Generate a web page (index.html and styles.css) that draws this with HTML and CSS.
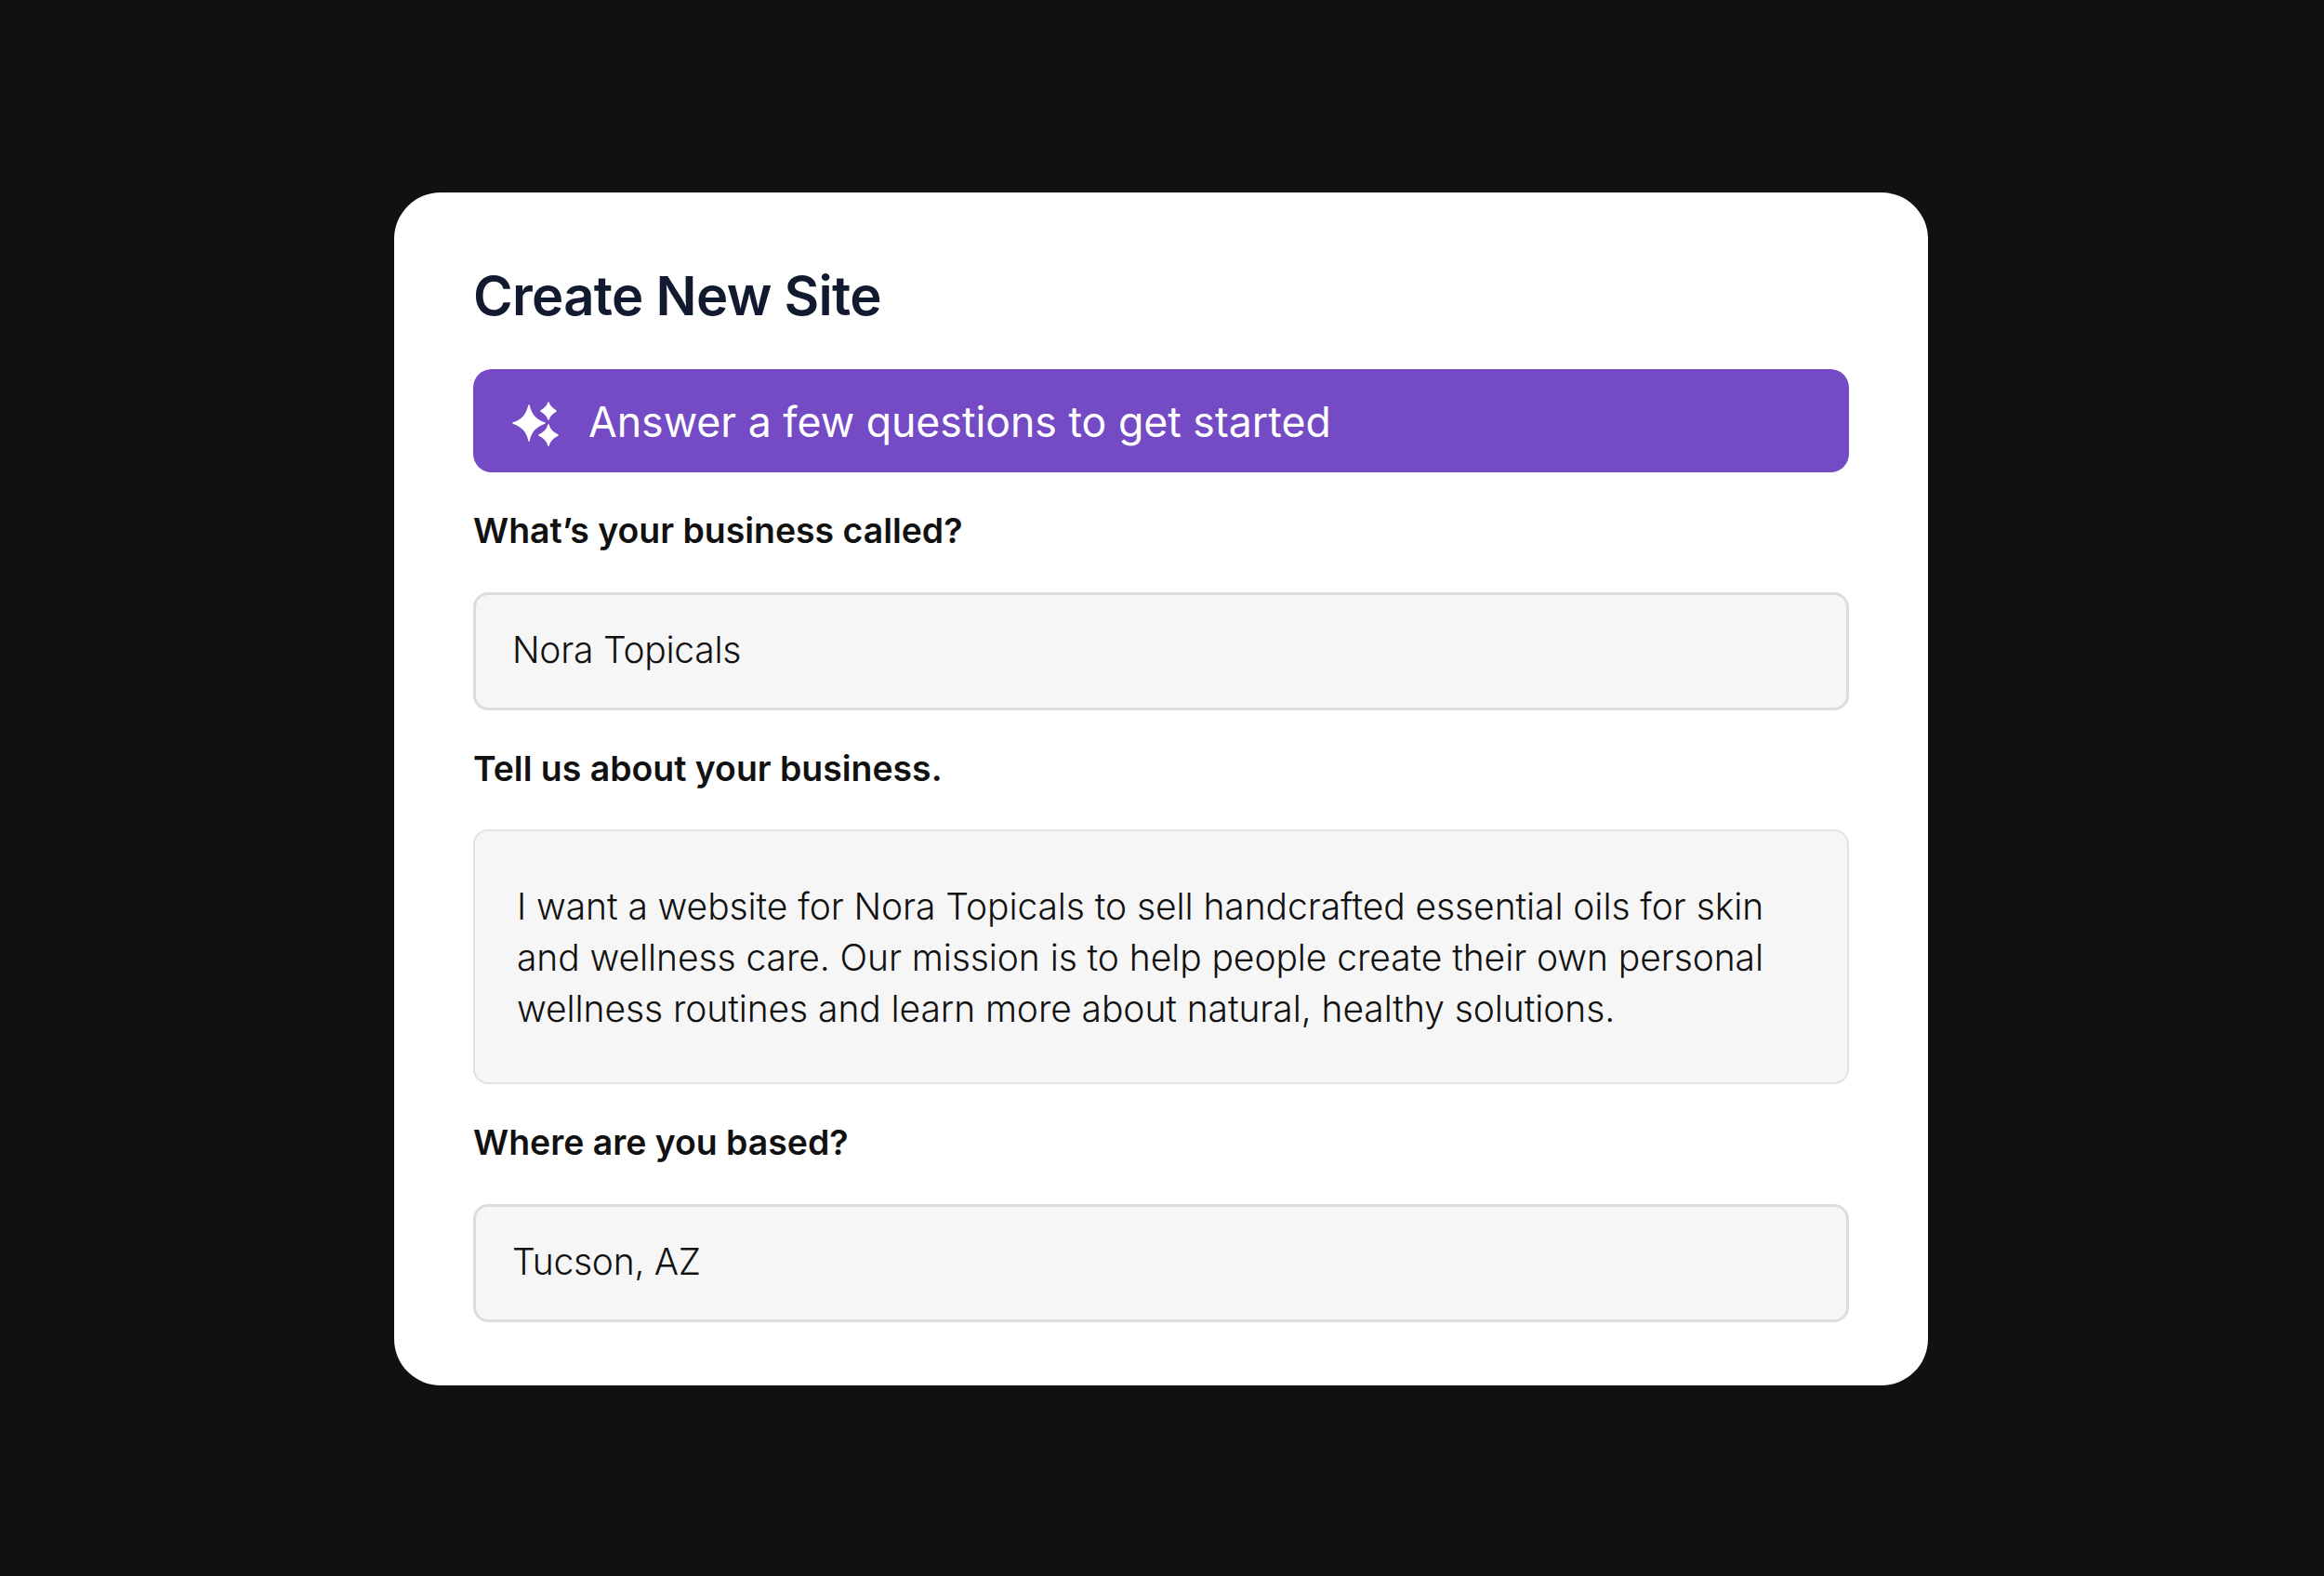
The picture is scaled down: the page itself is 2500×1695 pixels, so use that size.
FILE: index.html
```html
<!DOCTYPE html>
<html lang="en">
<head>
  <meta charset="UTF-8" />
  <title>Create New Site</title>
  <link rel="stylesheet" href="styles.css">
</head>
<body>

<div class="card">
  <h1 class="title">Create New Site</h1>

  <div class="banner">
    <svg class="sparkle" viewBox="0 0 56 56" aria-hidden="true">
      <path d="M21 11 C23 20 27 26 38 30 C27 34 23 40 21 49 C19 40 15 34 4 30 C15 26 19 20 21 11 Z"/>
      <path d="M42 8 C43 12 45 14 50 17 C45 20 43 22 42 26 C41 22 39 20 34 17 C39 14 41 12 42 8 Z"/>
      <path d="M42 32 C43 37 46 40 52 43 C46 46 43 49 42 54 C41 49 38 46 32 43 C38 40 41 37 42 32 Z"/>
    </svg>
    <span>Answer a few questions to get started</span>
  </div>

  <div class="label">What’s your business called?</div>
  <div class="field">Nora Topicals</div>

  <div class="label">Tell us about your business.</div>
  <div class="field field-area">I want a website for Nora Topicals to sell handcrafted essential oils for skin and wellness care. Our mission is to help people create their own personal wellness routines and learn more about natural, healthy solutions.</div>

  <div class="label">Where are you based?</div>
  <div class="field">Tucson, AZ</div>
</div>

</body>
</html>
```

FILE: styles.css
```css
* { margin: 0; padding: 0; box-sizing: border-box; }

body {
  width: 2500px;
  height: 1695px;
  background: #111;
  color: #111;
  font-family: "Inter", sans-serif;
  padding: 207px 0 0 424px;
  overflow: hidden;
}

.card {
  width: 1650px;
  height: 1283px;
  background: #fff;
  border-radius: 50px;
  padding: 76px 85px 0 85px;
}

.title {
  font-size: 58px;
  line-height: 70px;
  font-weight: 600;
  letter-spacing: -0.7px;
  color: #111a2e;
  margin-bottom: 44px;
}

.banner {
  height: 111px;
  background: #744bc4;
  border-radius: 20px;
  color: #fff;
  display: flex;
  align-items: center;
  gap: 29px;
  padding-left: 39px;
  font-size: 44.6px;
}

.banner span { padding-top: 2px; }

.sparkle {
  width: 56px;
  height: 56px;
  fill: #fff;
  stroke: #fff;
  stroke-width: 1.5;
  stroke-linejoin: round;
}

.label {
  font-size: 37.4px;
  font-weight: 600;
  line-height: 48px;
  margin: 39px 0 41.5px;
}

.field {
  height: 127px;
  background: #f6f6f7;
  border: 3px solid #dcdcde;
  border-radius: 16px;
  display: flex;
  align-items: center;
  padding: 0 0 3px 39px;
  font-size: 39px;
  font-weight: 350;
  letter-spacing: -0.25px;
}

.field-area {
  height: 274px;
  border: 2px solid #e2e2e4;
  padding: 1px 80px 0 45px;
  letter-spacing: -0.08px;
  line-height: 55px;
}
```
